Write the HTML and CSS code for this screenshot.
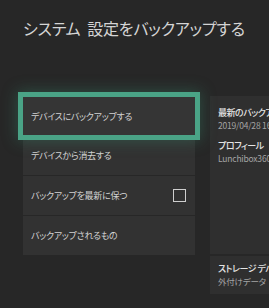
FILE: index.html
```html
<!doctype html>
<html lang="ja">
    <head>
        <meta charset="UTF-8" />
        <meta name="viewport" content="width=device-width, initial-scale=1.0" />
        <title>システム 設定をバックアップする</title>
        <link rel="stylesheet" href="styles.css">
    </head>
    <body>
        <div class="page">
            <h1 class="title">システム&nbsp;&nbsp;設定をバックアップする</h1>

            <div class="main">
                <!-- Menu on the left -->
                <div class="menu">
                    <div class="item focused">デバイスにバックアップする</div>
                    <div class="item">デバイスから消去する</div>
                    <div class="item">
                        <span>バックアップを最新に保つ</span>
                        <span class="checkbox"></span>
                    </div>
                    <div class="item">バックアップされるもの</div>
                </div>

                <!-- Details on the right -->
                <div class="side">
                    <div class="panel">
                        <div class="label">最新のバックアップ</div>
                        <div class="value">2019/04/28 16:32</div>
                        <div class="label gap">プロフィール</div>
                        <div class="value">Lunchibox3600</div>
                    </div>
                    <div class="panel storage">
                        <div class="label">ストレージ デバイス</div>
                        <div class="value">外付けデータ</div>
                    </div>
                </div>
            </div>
        </div>
    </body>
</html>
```

FILE: styles.css
```css
/* Basic styling */
html,
body {
    margin: 0;
    padding: 0;
    background-color: #272727;
    overflow: hidden;
}
body {
    width: 269px;
    height: 308px;
    font-family: "Noto Sans CJK JP", "Noto Sans", sans-serif;
    font-feature-settings: "palt";
    color: #d6d6d6;
}
.page {
    padding: 15px 0 0 23px;
}
.title {
    margin: 0;
    font-size: 16px;
    font-weight: normal;
    line-height: 26px;
    letter-spacing: -0.2px;
    color: #d4d4d4;
    white-space: nowrap;
}
.main {
    display: flex;
    gap: 15px;
    margin-top: 55px;
}
.menu {
    flex-shrink: 0;
    width: 172px;
    display: flex;
    flex-direction: column;
    gap: 1px;
}
.item {
    height: 39px;
    padding: 0 9px 0 8px;
    display: flex;
    align-items: center;
    justify-content: space-between;
    background-color: #323232;
    font-size: 9px;
    letter-spacing: -0.3px;
    color: #d2d2d2;
    white-space: nowrap;
}
.item.focused {
    position: relative;
    z-index: 1;
    height: 38px;
    margin-top: 1px;
    background-color: #353535;
    box-shadow: 0 0 0 5px #4aa386, 0 0 14px 6px rgba(56, 150, 118, 0.35);
}
.checkbox {
    width: 11px;
    height: 11px;
    border: 1px solid #cfcfcf;
}
.side {
    flex: 1;
    min-width: 0;
    display: flex;
    flex-direction: column;
    gap: 2px;
}
.panel {
    height: 158px;
    padding: 11px 0 0 8px;
    box-sizing: border-box;
    background-color: #2f2f2f;
    white-space: nowrap;
    overflow: hidden;
}
.panel.storage {
    height: 38px;
    padding-top: 7px;
}
.label {
    font-size: 9px;
    font-weight: 500;
    line-height: 12px;
    letter-spacing: -0.5px;
    color: #e4e4e4;
}
.label.gap {
    margin-top: 9px;
}
.value {
    font-size: 8.5px;
    line-height: 12px;
    letter-spacing: -0.2px;
    color: #a4a4a4;
}
```
